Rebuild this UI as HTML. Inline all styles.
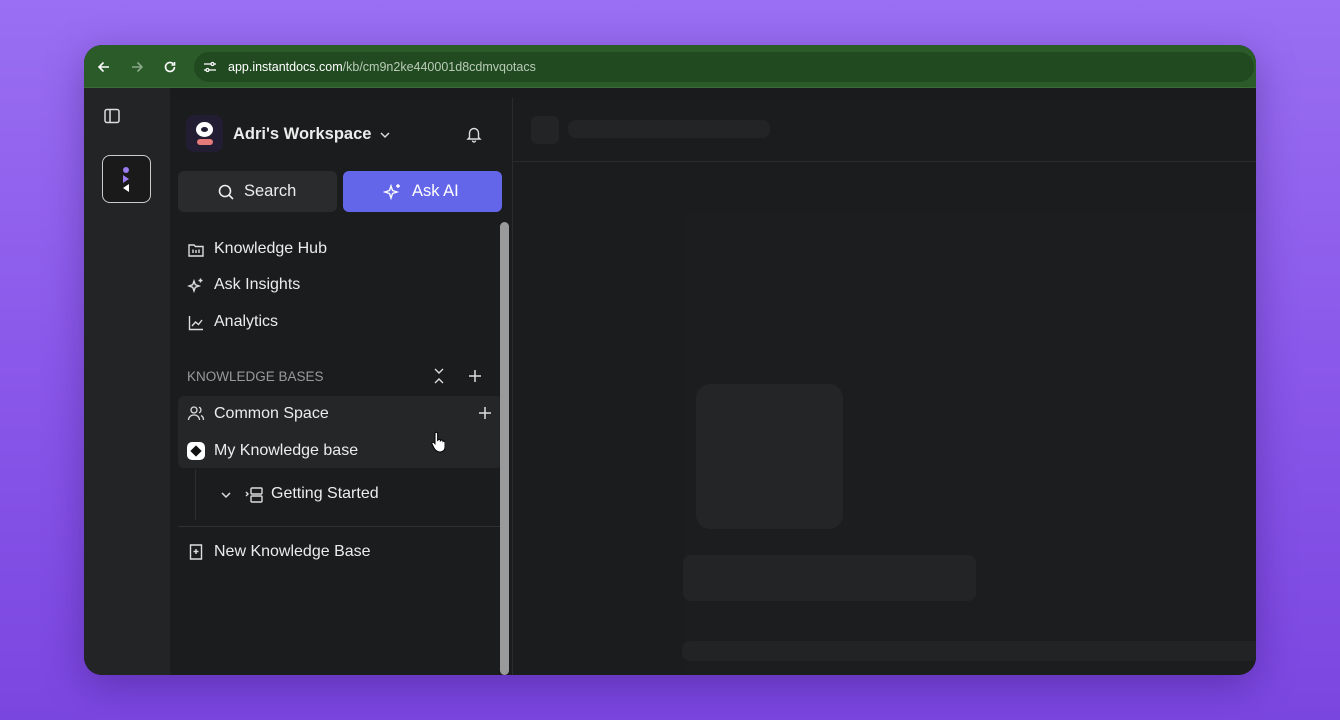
<!DOCTYPE html>
<html><head><style>
*{margin:0;padding:0;box-sizing:border-box}
body{width:1340px;height:720px;overflow:hidden;font-family:"Liberation Sans",sans-serif;background:linear-gradient(180deg,#9a6ff2 0%,#8a58ea 50%,#7a46e0 100%);position:relative}
.win{position:absolute;left:84px;top:45px;width:1172px;height:630px;border-radius:18px;overflow:hidden;background:#1a1b1c;box-shadow:0 10px 40px rgba(40,10,90,.35)}
.bar{position:absolute;left:0;top:0;width:100%;height:43px;background:#2a5b29;border-bottom:1px solid #3a6b38}
.url{position:absolute;left:110px;top:7px;width:1060px;height:30px;border-radius:15px;background:#214a21}
.url span{position:absolute;left:34px;top:8px;font-size:12.5px;color:#fff}
.url span i{font-style:normal;color:#b9cbb7}
.rail{position:absolute;left:0;top:43px;width:86px;height:587px;background:#232425}
.side{position:absolute;left:86px;top:53px;width:342px;height:577px;background:#1b1c1d;border-radius:10px 0 0 0}
.main{position:absolute;left:428px;top:53px;right:0;bottom:0;background:#1b1c1d;border-left:1px solid #2a2b2c}
.t{position:absolute;color:#ececec;font-size:16px;white-space:nowrap}
.sk{position:absolute;background:#232425;border-radius:8px}
svg{position:absolute}
</style></head><body>
<div class="win">
 <div class="bar">
  <svg style="left:12px;top:14px" width="16" height="16" viewBox="0 0 16 16" fill="none" stroke="#fff" stroke-width="1.6"><path d="M13 8H3M7.5 3.5 3 8l4.5 4.5"/></svg>
  <svg style="left:45px;top:14px" width="16" height="16" viewBox="0 0 16 16" fill="none" stroke="#8aa888" stroke-width="1.6"><path d="M3 8h10M8.5 3.5 13 8l-4.5 4.5"/></svg>
  <svg style="left:78px;top:14px" width="16" height="16" viewBox="0 0 16 16" fill="none" stroke="#fff" stroke-width="1.6"><path d="M12.5 8a4.5 4.5 0 1 1-1.3-3.2M12.5 3v3h-3"/></svg>
  <div class="url">
   <svg style="left:9px;top:8px" width="14" height="14" viewBox="0 0 14 14" fill="none" stroke="#fff" stroke-width="1.3"><path d="M1 4h7M11 4h2M1 10h2M6 10h7"/><circle cx="9.5" cy="4" r="1.5"/><circle cx="4.5" cy="10" r="1.5"/></svg>
   <span>app.instantdocs.com<i>/kb/cm9n2ke440001d8cdmvqotacs</i></span>
  </div>
 </div>
 <div class="rail">
  <svg style="left:19px;top:19px" width="18" height="18" viewBox="0 0 18 18" fill="none" stroke="#ddd" stroke-width="1.5"><rect x="2" y="2.5" width="14" height="13" rx="2"/><path d="M7 2.5v13"/></svg>
  <div style="position:absolute;left:18px;top:67px;width:49px;height:48px;border:1.5px solid #ccc;border-radius:8px;background:#1a1a1a"></div>
  <div style="position:absolute;left:39px;top:79px;width:6px;height:6px;border-radius:50%;background:#9a7cf0"></div>
  <svg style="left:37px;top:86px" width="10" height="20" viewBox="0 0 10 20"><path d="M2 1l6 4-6 4z" fill="#9a7cf0"/><path d="M8 10l-6 4 6 4z" fill="#fff"/></svg>
 </div>
 <div class="side">
  <div style="position:absolute;left:16px;top:17px;width:37px;height:37px;border-radius:8px;background:#231d33"></div>
  <div style="position:absolute;left:26px;top:24px;width:17px;height:15px;border-radius:50%;border:5px solid #fff"></div>
  <div style="position:absolute;left:27px;top:41px;width:16px;height:6px;border-radius:4px;background:#e57a7a"></div>
  <div class="t" style="left:63px;top:27px;font-weight:bold;font-size:16.5px">Adri's Workspace</div>
  <svg style="left:208px;top:30px" width="14" height="14" viewBox="0 0 14 14" fill="none" stroke="#ddd" stroke-width="1.5"><path d="M3 5l4 4 4-4"/></svg>
  <svg style="left:295px;top:27px" width="18" height="18" viewBox="0 0 18 18" fill="none" stroke="#ddd" stroke-width="1.4"><path d="M4.5 12.5V8a4.5 4.5 0 0 1 9 0v4.5l1.5 1.5H3z M7.5 15.5a1.5 1.5 0 0 0 3 0"/></svg>
  <div style="position:absolute;left:8px;top:73px;width:159px;height:41px;border-radius:6px;background:#2a2b2c"></div>
  <svg style="left:47px;top:85px" width="18" height="18" viewBox="0 0 18 18" fill="none" stroke="#eee" stroke-width="1.6"><circle cx="8" cy="8" r="5.5"/><path d="M12 12l4 4"/></svg>
  <div class="t" style="left:74px;top:84px;font-size:16.5px">Search</div>
  <div style="position:absolute;left:173px;top:73px;width:159px;height:41px;border-radius:6px;background:#6466ea"></div>
  <svg style="left:213px;top:84px" width="20" height="20" viewBox="0 0 20 20" fill="none" stroke="#fff" stroke-width="1.4"><path d="M8 4l1.5 4.5L14 10l-4.5 1.5L8 16l-1.5-4.5L2 10l4.5-1.5z M15 2v4M13 4h4"/></svg>
  <div class="t" style="left:242px;top:84px;font-size:16.5px;color:#fff">Ask AI</div>
  <svg style="left:17px;top:143px" width="18" height="18" viewBox="0 0 18 18" fill="none" stroke="#ddd" stroke-width="1.4"><path d="M2 4h5l1.5 1.5H16V15H2z M6 12V8.5M9 12V9M12 12V8.5"/></svg>
  <div class="t" style="left:44px;top:142px">Knowledge Hub</div>
  <svg style="left:17px;top:179px" width="18" height="18" viewBox="0 0 18 18" fill="none" stroke="#ddd" stroke-width="1.4"><path d="M7 4l1.3 3.7L12 9l-3.7 1.3L7 14l-1.3-3.7L2 9l3.7-1.3z M13.5 1.5v4M11.5 3.5h4"/></svg>
  <div class="t" style="left:44px;top:178px">Ask Insights</div>
  <svg style="left:17px;top:216px" width="18" height="18" viewBox="0 0 18 18" fill="none" stroke="#ddd" stroke-width="1.4"><path d="M2.5 2v13.5H16 M5 12l3.5-4 3 2.5L15 6"/></svg>
  <div class="t" style="left:44px;top:215px">Analytics</div>
  <div class="t" style="left:17px;top:271px;font-size:13.5px;color:#9a9a9a">KNOWLEDGE BASES</div>
  <svg style="left:262px;top:270px" width="14" height="16" viewBox="0 0 14 16" fill="none" stroke="#ddd" stroke-width="1.4"><path d="M3 1l4 4 4-4M3 15l4-4 4 4"/></svg>
  <svg style="left:298px;top:271px" width="14" height="14" viewBox="0 0 14 14" fill="none" stroke="#ddd" stroke-width="1.5"><path d="M7 1v12M1 7h12"/></svg>
  <div style="position:absolute;left:8px;top:298px;width:324px;height:72px;border-radius:6px;background:#252627"></div>
  <svg style="left:17px;top:306px" width="18" height="18" viewBox="0 0 18 18" fill="none" stroke="#ddd" stroke-width="1.3"><circle cx="7" cy="6" r="3"/><path d="M1.5 16c0-3 2.5-5 5.5-5s5.5 2 5.5 5 M12 3.2a3 3 0 0 1 0 5.6 M14 11.5c1.5.7 2.5 2.3 2.5 4.5"/></svg>
  <div class="t" style="left:44px;top:307px">Common Space</div>
  <svg style="left:308px;top:308px" width="14" height="14" viewBox="0 0 14 14" fill="none" stroke="#ddd" stroke-width="1.5"><path d="M7 1v12M1 7h12"/></svg>
  <div style="position:absolute;left:17px;top:344px;width:18px;height:18px;border-radius:5px;background:#fff"></div>
  <div style="position:absolute;left:22px;top:349px;width:8px;height:8px;background:#111;transform:rotate(45deg)"></div>
  <div class="t" style="left:44px;top:344px">My Knowledge base</div>
  <svg style="left:261px;top:333px" width="14" height="22" viewBox="0 0 14 22"><path d="M4 2.5a1.3 1.3 0 0 1 2.6 0V10l.4-1a1.3 1.3 0 0 1 2.4.8l.3-.3a1.3 1.3 0 0 1 2.3 1l.3-.2a1.2 1.2 0 0 1 1.7 1V16c0 3-2 5-5 5s-4.5-1.5-6-4L1 13a1.3 1.3 0 0 1 2-1.5l1 1.2z" fill="#fff" stroke="#000" stroke-width="1"/></svg>
  <div style="position:absolute;left:25px;top:372px;width:1px;height:50px;background:#2e2f30"></div>
  <svg style="left:49px;top:390px" width="14" height="14" viewBox="0 0 14 14" fill="none" stroke="#ddd" stroke-width="1.5"><path d="M3 5l4 4 4-4"/></svg>
  <svg style="left:74px;top:387px" width="20" height="20" viewBox="0 0 20 20" fill="none" stroke="#ddd" stroke-width="1.4"><path d="M2 7l2 2-2 2"/><rect x="7" y="3" width="11" height="6" rx="1"/><rect x="7" y="11" width="11" height="6" rx="1"/></svg>
  <div class="t" style="left:101px;top:387px">Getting Started</div>
  <div style="position:absolute;left:8px;top:428px;width:324px;height:1px;background:#303132"></div>
  <svg style="left:17px;top:445px" width="18" height="18" viewBox="0 0 18 18" fill="none" stroke="#ddd" stroke-width="1.4"><path d="M3.5 2h11v14h-11z M9 6v5M6.5 8.5h5"/></svg>
  <div class="t" style="left:44px;top:445px">New Knowledge Base</div>
  <div style="position:absolute;left:330px;top:124px;width:9px;height:453px;border-radius:5px;background:#9a9a9a"></div>
 </div>
 <div class="main">
  <div class="sk" style="left:18px;top:18px;width:28px;height:28px;border-radius:6px"></div>
  <div class="sk" style="left:55px;top:22px;width:202px;height:18px"></div>
  <div style="position:absolute;left:0;top:63px;right:0;height:1px;background:#2a2b2c"></div>
  <div class="sk" style="left:172px;top:115px;width:580px;height:465px;background:#1c1d1e"></div>
  <div class="sk" style="left:183px;top:286px;width:147px;height:145px;border-radius:14px;background:#242526"></div>
  <div class="sk" style="left:170px;top:457px;width:293px;height:46px;background:#232425"></div>
  <div class="sk" style="left:169px;top:543px;width:600px;height:20px;background:#222324"></div>
 </div>
</div>
</body></html>
